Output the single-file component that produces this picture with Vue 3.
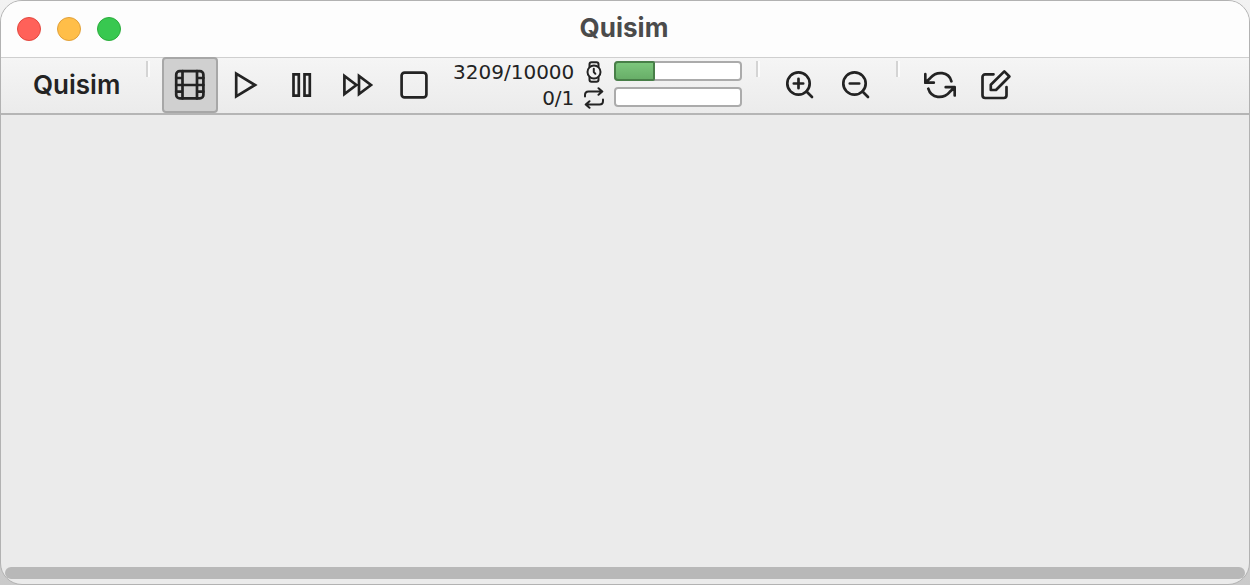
<script setup>
import { ref } from 'vue'

const animate = ref(true)
const meters = [
  { id: 'time', label: 'Time steps', value: 3209, max: 10000 },
  { id: 'runs', label: 'Repetitions', value: 0, max: 1 },
]
const percent = (m) => `${(m.value / m.max) * 100}%`
</script>

<template>
  <div class="window">
    <header class="titlebar">
      <div class="lights">
        <button class="light close" type="button" aria-label="Close"></button>
        <button class="light minimize" type="button" aria-label="Minimize"></button>
        <button class="light maximize" type="button" aria-label="Zoom window"></button>
      </div>
      <h1 class="title">Quisim</h1>
    </header>

    <nav class="toolbar" aria-label="Simulation">
      <strong class="brand">Quisim</strong>
      <span class="divider"></span>
      <div class="group">
        <button class="tool" :class="{ active: animate }" type="button" aria-label="Animate" :aria-pressed="animate" @click="animate = !animate">
          <svg viewBox="0 0 32 32"><rect x="2.2" y="2.2" width="27.2" height="27.2" rx="3.5" /><path d="M8.5 2.2v27.2M23 2.2v27.2M2.2 16h27.2M2.2 9h6.3M2.2 22.7h6.3M23 9h6.4M23 22.7h6.4" /></svg>
        </button>
        <button class="tool" type="button" aria-label="Play">
          <svg class="sharp" viewBox="0 0 32 32"><path d="M6.2 4.7v22.6L25 16z" /></svg>
        </button>
        <button class="tool" type="button" aria-label="Pause">
          <svg class="sharp" viewBox="0 0 32 32"><path d="M7.5 5.3h5.3v21.4h-5.3zM18.5 5.3h5.3v21.4h-5.3z" /></svg>
        </button>
        <button class="tool" type="button" aria-label="Fast forward">
          <svg class="sharp" viewBox="0 0 32 32"><path d="M2.4 6.9v18.2L14.4 16zM17 6.9v18.2L29 16z" /></svg>
        </button>
        <button class="tool" type="button" aria-label="Stop">
          <svg viewBox="0 0 32 32"><rect x="3.6" y="3.6" width="24.8" height="24.8" rx="3" /></svg>
        </button>
      </div>

      <div class="meters">
        <div v-for="m in meters" :key="m.id" class="meter">
          <span class="count">{{ m.value }}/{{ m.max }}</span>
          <svg v-if="m.id === 'time'" class="mini" viewBox="0 0 22 22"><circle cx="11" cy="11" r="6.5" /><path d="M6.5 5.8V3.2a2 2 0 0 1 2-2h5a2 2 0 0 1 2 2v2.6M6.5 16.2v2.6a2 2 0 0 0 2 2h5a2 2 0 0 0 2-2v-2.6M10.8 7.8V11l1.6 1.8" /></svg>
          <svg v-else class="mini" viewBox="0 0 22 22"><path d="M2 9.5V8c0-2 1-3.5 3.5-3.5H19M15.5 1.2 19.3 4.5 15.5 7.8M20 12.5V14c0 2-1 3.5-3.5 3.5H3M6.5 14.2 2.7 17.5 6.5 20.8" /></svg>
          <div class="track" role="progressbar" :aria-label="m.label" :aria-valuenow="m.value" aria-valuemin="0" :aria-valuemax="m.max">
            <div v-if="m.value" class="fill" :style="{ width: percent(m) }"></div>
          </div>
        </div>
      </div>

      <span class="divider"></span>
      <div class="group">
        <button class="tool" type="button" aria-label="Zoom in">
          <svg viewBox="0 0 32 32"><circle cx="14.5" cy="14.5" r="11.2" /><path d="m22.5 22.5 5.5 5.5M9.8 14.5h9.4M14.5 9.8v9.4" /></svg>
        </button>
        <button class="tool" type="button" aria-label="Zoom out">
          <svg viewBox="0 0 32 32"><circle cx="14.5" cy="14.5" r="11.2" /><path d="m22.5 22.5 5.5 5.5M9.8 14.5h9.4" /></svg>
        </button>
      </div>
      <span class="divider reload-divider"></span>
      <div class="group">
        <button class="tool" type="button" aria-label="Reload">
          <svg viewBox="0 0 32 32"><path d="M1.3 5.2v8.5h8.5M1.8 13.2l4.6-4.3C12.5 1.8 24.8 2.3 27.4 12.3M30.7 26.5v-8.3h-9M30.2 18.7l-4.6 4.4C19.5 30.2 7.2 29.7 4.3 19.7" /></svg>
        </button>
        <button class="tool" type="button" aria-label="Edit">
          <svg viewBox="0 0 32 32"><path d="M13.5 5.3H5.2a2.7 2.7 0 0 0-2.7 2.7v18.3A2.7 2.7 0 0 0 5.2 29h18.6a2.7 2.7 0 0 0 2.7-2.7V18M24.3 2.4l5.1 5.1L16 21h-5.2v-5.2z" /></svg>
        </button>
      </div>
    </nav>

    <main class="canvas"></main>
    <div class="scrollbar"></div>
  </div>
</template>

<style>
body {
  background: linear-gradient(#f2f2f2, #cacaca);
}
</style>

<style scoped>
.window {
  box-sizing: border-box;
  min-height: 100vh;
  display: flex;
  flex-direction: column;
  overflow: hidden;
  border: 1px solid #b2b2b2;
  border-radius: 22px;
  background: #ebebeb;
  color: #232323;
  font-family: Inter, "Liberation Sans", sans-serif;
}
.titlebar {
  box-sizing: border-box;
  height: 57px;
  display: grid;
  grid-template-columns: 1fr auto 1fr;
  align-items: center;
  padding: 0 18px 0 16px;
  border-bottom: 1px solid #cfcfcf;
  background: #fdfdfd;
}
.lights {
  display: flex;
  gap: 16px;
}
.light {
  width: 24px;
  height: 24px;
  padding: 0;
  border: 1px solid;
  border-radius: 50%;
}
.close { background: #ff6159; border-color: #e2483f; }
.minimize { background: #ffbe48; border-color: #e0a03a; }
.maximize { background: #38c850; border-color: #2bac3c; }
.title {
  margin: 0;
  padding-bottom: 2px;
  font-size: 26px;
  line-height: 32px;
  font-weight: 700;
  color: #4b4b4b;
}
.toolbar {
  display: flex;
  align-items: flex-start;
  height: 55px;
  border-bottom: 2px solid #b5b5b5;
  background: linear-gradient(#f5f5f5, #ebebeb);
}
.brand {
  padding: 0 26px 0 32px;
  font-size: 26px;
  line-height: 53px;
  font-weight: 600;
}
.divider {
  width: 2px;
  height: 16px;
  margin: 3px 12px 0 0;
  border-right: 2px solid #fcfcfc;
  background: #d4d4d4;
  background-clip: padding-box;
  flex: none;
}
.reload-divider {
  margin-left: 12px;
}
.group {
  display: flex;
}
.tool {
  box-sizing: border-box;
  width: 56px;
  height: 56px;
  margin-top: -1px;
  display: grid;
  place-items: center;
  padding: 0;
  border: 2px solid transparent;
  border-radius: 4px;
  background: none;
  color: inherit;
}
.tool.active {
  border-color: #a7a7a7;
  background: #d0d0d0;
}
.tool svg {
  width: 32px;
  height: 32px;
}
svg {
  fill: none;
  stroke: currentColor;
  stroke-width: 2.7;
  stroke-linecap: round;
  stroke-linejoin: round;
}
.sharp {
  stroke-linejoin: miter;
}
.meters {
  display: grid;
  gap: 6px;
  margin: 3px 14px 0 10px;
}
.meter {
  display: grid;
  grid-template-columns: 122px 22px 128px;
  column-gap: 9px;
  align-items: start;
  height: 20px;
}
.count {
  font: 20px/22px "DejaVu Sans", sans-serif;
  text-align: right;
}
.mini {
  width: 22px;
  height: 22px;
  stroke-width: 2;
}
.track {
  height: 20px;
  border-radius: 4px;
  background: #fff;
  box-shadow: inset 0 0 0 2px #ababab;
}
.fill {
  box-sizing: border-box;
  height: 20px;
  border: 2px solid #487f48;
  border-radius: 4px 2px 2px 4px;
  background: linear-gradient(#7cc77c, #68ae68);
}
.canvas {
  flex: 1;
}
.scrollbar {
  height: 12px;
  margin: 0 4px 5px;
  border-radius: 6px;
  background: #b8b8b8;
}
</style>
